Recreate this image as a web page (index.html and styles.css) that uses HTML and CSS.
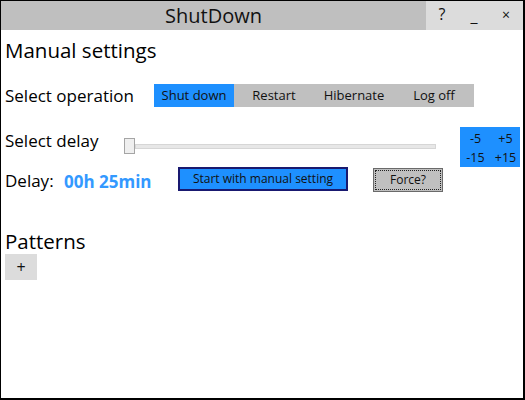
FILE: index.html
```html
<!DOCTYPE html>
<html>
<head>
<meta charset="utf-8">
<link rel="stylesheet" href="styles.css">
</head>
<body>
<div class="window">
  <div class="titlebar">
    <div class="title">ShutDown</div>
    <div class="controls">
      <span class="ctl">?</span>
      <span class="ctl ctl-min">_</span>
      <span class="ctl ctl-close">×</span>
    </div>
  </div>
  <div class="content">
    <div class="heading">Manual settings</div>
    <div class="row row-op">
      <div class="label label-op">Select operation</div>
      <div class="ops">
        <div class="op op-active">Shut down</div>
        <div class="op">Restart</div>
        <div class="op">Hibernate</div>
        <div class="op">Log off</div>
      </div>
    </div>
    <div class="row row-select">
      <div class="label label-delay">Select delay</div>
      <div class="slider">
        <div class="thumb"></div>
        <div class="track"></div>
      </div>
      <div class="adjust">
        <span>-5</span><span>+5</span>
        <span>-15</span><span>+15</span>
      </div>
    </div>
    <div class="row row-delay">
      <div class="label label-d">Delay:</div>
      <div class="value">00h 25min</div>
      <div class="btn-start">Start with manual setting</div>
      <div class="btn-force">Force?</div>
    </div>
    <div class="heading heading-pat">Patterns</div>
    <div class="btn-add">+</div>
  </div>
</div>
</body>
</html>
```
FILE: styles.css
```css
* { box-sizing: border-box; }
html, body { margin: 0; padding: 0; background: #fff; }
body {
  font-family: "Open Sans", "Noto Sans", sans-serif;
  color: #000;
}
.window {
  width: 525px;
  height: 400px;
  border-left: 1px solid #000;
  border-top: 1px solid #000;
  border-right: 2px solid #000;
  border-bottom: 2px solid #000;
  background: #fff;
  overflow: hidden;
}
.titlebar {
  display: flex;
  height: 29px;
}
.title {
  width: 425px;
  background: #bfbfbf;
  text-align: center;
  font-size: 20px;
  line-height: 29px;
  color: #111;
}
.controls {
  flex: 1;
  display: flex;
  background: #dcdcdc;
}
.ctl {
  width: 32px;
  text-align: center;
  font-size: 16px;
  line-height: 27px;
  color: #111;
}
.ctl-min { line-height: 30px; }
.ctl-close { font-size: 14px; }
.content {
  padding-left: 4px;
}
.heading {
  font-size: 20.5px;
  line-height: 40px;
  height: 40px;
}
.row {
  display: flex;
}
.label {
  font-size: 17px;
}
.row-op {
  margin-top: 14px;
  height: 23px;
  align-items: center;
}
.label-op { width: 149px; }
.ops { display: flex; }
.op {
  width: 80px;
  height: 23px;
  background: #c0c0c0;
  text-align: center;
  font-size: 13px;
  line-height: 23px;
  color: #111;
}
.op-active { background: #1e90ff; }
.row-select {
  margin-top: 20px;
  height: 40px;
}
.label-delay {
  width: 119px;
  line-height: 28px;
}
.slider {
  display: flex;
  align-items: center;
  margin-top: 11px;
  height: 16px;
}
.thumb {
  width: 11px;
  height: 16px;
  background: #efefef;
  border: 1px solid #a5a5a5;
}
.track {
  width: 301px;
  height: 5px;
  background: #e7e7e7;
  border: 1px solid #d6d6d6;
}
.adjust {
  margin-left: 24px;
  width: 60px;
  height: 40px;
  background: #1e90ff;
  display: grid;
  grid-template-columns: 31px 29px;
  grid-template-rows: 19px 19px;
  padding-top: 2px;
  font-size: 12.5px;
  line-height: 19px;
  text-align: center;
  color: #111;
}
.row-delay {
  height: 24px;
  align-items: center;
}
.label-d { width: 59px; line-height: 28px; margin-top: 4px; }
.value {
  width: 114px;
  font-size: 17px;
  font-weight: bold;
  color: #3399ff;
  margin-top: 4px;
}
.btn-start {
  width: 170px;
  height: 24px;
  background: #1e90ff;
  border: 2px solid #191970;
  text-align: center;
  font-size: 12px;
  line-height: 20px;
  color: #111;
}
.btn-force {
  margin-left: 25px;
  width: 70px;
  height: 24px;
  margin-top: 2px;
  background: #c0c0c0;
  border: 1px solid #6a6a6a;
  outline: 1px dotted #222;
  outline-offset: -3px;
  text-align: center;
  font-size: 12px;
  line-height: 22px;
  color: #111;
}
.heading-pat {
  margin-top: 37px;
  height: 26px;
  line-height: 26px;
}
.btn-add {
  width: 32px;
  height: 26px;
  background: #dcdcdc;
  text-align: center;
  font-size: 16px;
  line-height: 26px;
  color: #111;
}
```
